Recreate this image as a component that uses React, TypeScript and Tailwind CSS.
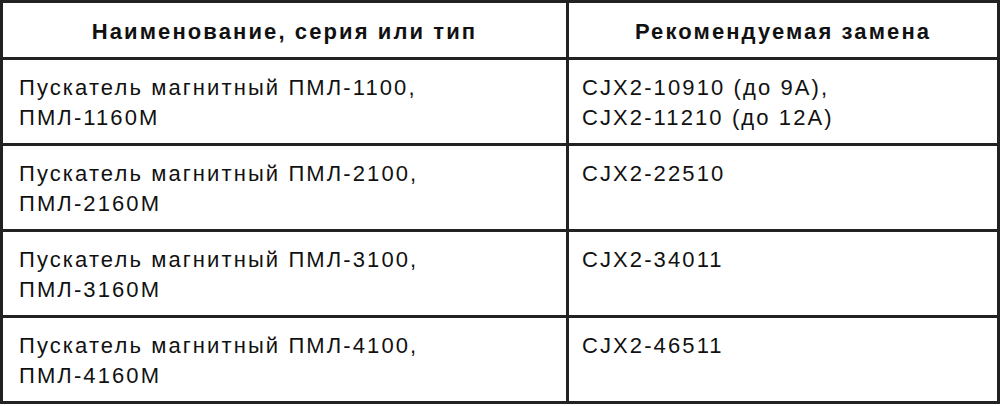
const rows = [
  { name: ["Пускатель магнитный ПМЛ-1100,", "ПМЛ-1160М"], repl: ["CJX2-10910 (до 9А),", "CJX2-11210 (до 12А)"] },
  { name: ["Пускатель магнитный ПМЛ-2100,", "ПМЛ-2160М"], repl: ["CJX2-22510"] },
  { name: ["Пускатель магнитный ПМЛ-3100,", "ПМЛ-3160М"], repl: ["CJX2-34011"] },
  { name: ["Пускатель магнитный ПМЛ-4100,", "ПМЛ-4160М"], repl: ["CJX2-46511"] },
];

export default function App() {
  return (
    <div className="w-[1000px] h-[406px] bg-white font-['Liberation_Sans',Arial,sans-serif] text-[#111]">
      <table className="w-[1000px] border-collapse border-[3px] border-[#222]">
        <colgroup>
          <col className="w-[566px]" />
          <col />
        </colgroup>
        <thead>
          <tr className="h-[57px]">
            <th className="border-[3px] border-[#222] text-center align-middle pt-[2px] text-[22px] tracking-[2.1px] font-bold">
              Наименование, серия или тип
            </th>
            <th className="border-[3px] border-[#222] text-center align-middle pt-[2px] text-[22px] tracking-[2.1px] font-bold">
              Рекомендуемая замена
            </th>
          </tr>
        </thead>
        <tbody>
          {rows.map((r, i) => (
            <tr key={i} className="h-[86px]">
              <td className="border-[3px] border-[#222] align-top pl-[16px] pt-[13px] text-[22px] tracking-[2.1px] leading-[30px]">
                {r.name.map((l) => (
                  <div key={l}>{l}</div>
                ))}
              </td>
              <td className="border-[3px] border-[#222] align-top pl-[13px] pt-[13px] text-[22px] tracking-[2.1px] leading-[30px]">
                {r.repl.map((l) => (
                  <div key={l}>{l}</div>
                ))}
              </td>
            </tr>
          ))}
        </tbody>
      </table>
    </div>
  );
}
